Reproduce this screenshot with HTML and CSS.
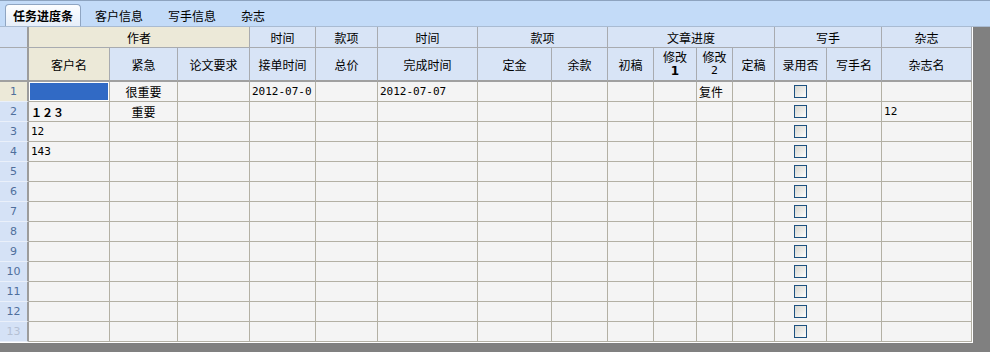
FILE: index.html
```html
<!DOCTYPE html>
<html lang="zh-CN">
<head>
    <meta charset="UTF-8">
    <title>任务进度条</title>
    <link rel="stylesheet" href="styles.css">
</head>
<body>
<div class="tabbar">
    <span class="tab tab-active">任务进度条</span>
    <span class="tab">客户信息</span>
    <span class="tab">写手信息</span>
    <span class="tab">杂志</span>
</div>
<div class="sheet-area">
    <table class="sheet">
        <colgroup>
            <col class="w-no"><col class="w-kh"><col class="w-jj"><col class="w-yq">
            <col class="w-jd"><col class="w-zj"><col class="w-wc"><col class="w-dj">
            <col class="w-yk"><col class="w-cg"><col class="w-x1"><col class="w-x2">
            <col class="w-dg"><col class="w-ly"><col class="w-xs"><col class="w-zz">
        </colgroup>
        <thead>
        <tr class="hd1">
            <th class="corner"></th>
            <th class="hsel" colspan="3">作者</th>
            <th>时间</th>
            <th>款项</th>
            <th>时间</th>
            <th colspan="2">款项</th>
            <th colspan="4">文章进度</th>
            <th colspan="2">写手</th>
            <th>杂志</th>
        </tr>
        <tr class="hd2">
            <th class="corner"></th>
            <th class="hsel">客户名</th>
            <th>紧急</th>
            <th>论文要求</th>
            <th>接单时间</th>
            <th>总价</th>
            <th>完成时间</th>
            <th>定金</th>
            <th>余款</th>
            <th>初稿</th>
            <th class="two"><span class="ln">修改</span><b class="ln num">1</b></th>
            <th class="two"><span class="ln">修改</span><span class="ln num">2</span></th>
            <th>定稿</th>
            <th>录用否</th>
            <th>写手名</th>
            <th>杂志名</th>
        </tr>
        </thead>
        <tbody>
        <tr><td class="no no-sel">1</td><td class="sel"></td><td class="c zh">很重要</td><td></td><td>2012-07-0</td><td></td><td>2012-07-07</td><td></td><td></td><td></td><td></td><td class="zh">复件</td><td></td><td><span class="cb"></span></td><td></td><td></td></tr>
        <tr><td class="no">2</td><td class="big">１２３</td><td class="c zh">重要</td><td></td><td></td><td></td><td></td><td></td><td></td><td></td><td></td><td></td><td></td><td><span class="cb"></span></td><td></td><td>12</td></tr>
        <tr><td class="no">3</td><td>12</td><td></td><td></td><td></td><td></td><td></td><td></td><td></td><td></td><td></td><td></td><td></td><td><span class="cb"></span></td><td></td><td></td></tr>
        <tr><td class="no">4</td><td>143</td><td></td><td></td><td></td><td></td><td></td><td></td><td></td><td></td><td></td><td></td><td></td><td><span class="cb"></span></td><td></td><td></td></tr>
        <tr><td class="no">5</td><td></td><td></td><td></td><td></td><td></td><td></td><td></td><td></td><td></td><td></td><td></td><td></td><td><span class="cb"></span></td><td></td><td></td></tr>
        <tr><td class="no">6</td><td></td><td></td><td></td><td></td><td></td><td></td><td></td><td></td><td></td><td></td><td></td><td></td><td><span class="cb"></span></td><td></td><td></td></tr>
        <tr><td class="no">7</td><td></td><td></td><td></td><td></td><td></td><td></td><td></td><td></td><td></td><td></td><td></td><td></td><td><span class="cb"></span></td><td></td><td></td></tr>
        <tr><td class="no">8</td><td></td><td></td><td></td><td></td><td></td><td></td><td></td><td></td><td></td><td></td><td></td><td></td><td><span class="cb"></span></td><td></td><td></td></tr>
        <tr><td class="no">9</td><td></td><td></td><td></td><td></td><td></td><td></td><td></td><td></td><td></td><td></td><td></td><td></td><td><span class="cb"></span></td><td></td><td></td></tr>
        <tr><td class="no">10</td><td></td><td></td><td></td><td></td><td></td><td></td><td></td><td></td><td></td><td></td><td></td><td></td><td><span class="cb"></span></td><td></td><td></td></tr>
        <tr><td class="no">11</td><td></td><td></td><td></td><td></td><td></td><td></td><td></td><td></td><td></td><td></td><td></td><td></td><td><span class="cb"></span></td><td></td><td></td></tr>
        <tr><td class="no">12</td><td></td><td></td><td></td><td></td><td></td><td></td><td></td><td></td><td></td><td></td><td></td><td></td><td><span class="cb"></span></td><td></td><td></td></tr>
        <tr><td class="no no-dim">13</td><td></td><td></td><td></td><td></td><td></td><td></td><td></td><td></td><td></td><td></td><td></td><td></td><td><span class="cb"></span></td><td></td><td></td></tr>
        </tbody>
    </table>
</div>
</body>
</html>
```

FILE: styles.css
```css
body{
    margin: 0;
    background: #808080;
    font: 12px "Noto Sans CJK SC", sans-serif;
    color: #000;
}
.tabbar{
    height: 25px;
    background: #c3dbf8;
    border-top: 1px solid #8da3bf;
    border-bottom: 1px solid #a9bbd2;
    display: flex;
    align-items: flex-end;
    padding-left: 5px;
}
.tab{
    height: 21px;
    line-height: 21px;
    padding: 0 11px;
    margin-left: 3px;
}
.tab-active{
    margin-left: 0;
    padding: 0 7px;
    font-weight: bold;
    background: linear-gradient(#fdfeff, #e6eef9);
    border: 1px solid #8fa5c2;
    border-bottom: none;
    border-radius: 4px 4px 0 0;
}
.sheet{
    border-collapse: separate;
    border-spacing: 0;
    table-layout: fixed;
    width: 973px;
    background: #f4f4f4;
    border-right: 1px solid #fff;
    border-bottom: 1px solid #fff;
}
.w-no{ width: 29px; }
.w-kh{ width: 81px; }
.w-jj{ width: 68px; }
.w-yq{ width: 72px; }
.w-jd{ width: 66px; }
.w-zj{ width: 62px; }
.w-wc{ width: 100px; }
.w-dj{ width: 74px; }
.w-yk{ width: 56px; }
.w-cg{ width: 46px; }
.w-x1{ width: 43px; }
.w-x2{ width: 36px; }
.w-dg{ width: 42px; }
.w-ly{ width: 52px; }
.w-xs{ width: 55px; }
.w-zz{ width: 90px; }
th, td{
    padding: 0 2px;
    overflow: hidden;
    white-space: nowrap;
    vertical-align: middle;
}
th{
    font-weight: normal;
    text-align: center;
    background: #d8e4f6;
    border-right: 1px solid #a8abb0;
    border-bottom: 1px solid #a8abb0;
}
.hd1{ height: 21px; }
.hd2{ height: 34px; }
.hd2 th{
    border-bottom: 2px solid #a0a0a0;
}
th.two{
    padding: 0 1px 1px;
}
.ln{
    display: block;
    height: 14px;
    line-height: 14px;
}
.num{
    font-family: "DejaVu Sans", sans-serif;
    font-size: 11px;
}
b.num{
    font-size: 12px;
}
th.hsel{
    background: #ece9d8;
}
th.corner{
    background: #d5e2f6;
    border-right: 2px solid #9c9c9c;
}
tbody tr{ height: 20px; }
td{
    font: 11px "DejaVu Sans Mono", "Noto Sans CJK SC", monospace;
    border-right: 1px solid #b3b0a4;
    border-bottom: 1px solid #b3b0a4;
}
td.zh{
    font: 12px "Noto Sans CJK SC", sans-serif;
}
td.c{ text-align: center; }
td.big{
    font: bold 11px "Noto Sans CJK SC", sans-serif;
}
td.no{
    font: 11px "DejaVu Sans", sans-serif;
    text-align: center;
    color: #4f6f9c;
    background: #d5e2f6;
    border-right: 2px solid #9c9c9c;
    border-bottom: 1px solid #eaf0fa;
}
td.no-sel{ background: #ece9d8; }
td.no-dim{ color: #b5c1d4; }
td.sel{
    background: #316ac5;
    box-shadow: inset 0 0 0 1px #fff;
}
.cb{
    display: block;
    width: 11px;
    height: 11px;
    margin: 0 auto;
    border: 1px solid #1c5180;
    background: linear-gradient(135deg, #d6d6d0, #fdfdfd);
}
```
